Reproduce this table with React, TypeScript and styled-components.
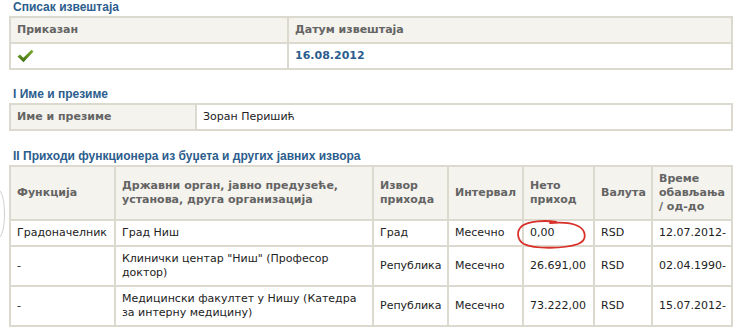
import React from "react";
import styled, { createGlobalStyle } from "styled-components";

const Global = createGlobalStyle`
  html, body { margin: 0; padding: 0; background: #fff; }
  body { width: 742px; height: 336px; overflow: hidden; }
`;

const Page = styled.div`
  position: relative;
  padding: 1px 9px 0 9px;
  width: 724px;
  font-family: "DejaVu Sans", Verdana, sans-serif;
  font-size: 11px;
  color: #222;
`;

const Section = styled.section<{ $gap?: number }>`
  margin-top: ${(p) => p.$gap ?? 0}px;
`;

const Title = styled.h2`
  margin: 0 0 2px 0;
  padding-left: 4px;
  font-family: "Liberation Sans", Arial, sans-serif;
  font-weight: bold;
  font-size: 12px;
  line-height: 13px;
  color: #2c5d8d;
`;

const Table = styled.table`
  width: 724px;
  table-layout: fixed;
  border-collapse: collapse;
  border: 2px solid #dcd9ce;
`;

const Th = styled.th`
  background: #f4f3ee;
  border: 2px solid #dcd9ce;
  padding: 5px 6px 5px 6px;
  text-align: left;
  vertical-align: middle;
  font-weight: bold;
  color: #646464;
  line-height: 14px;
`;

const Td = styled.td<{ $bold?: boolean }>`
  position: relative;
  border: 2px solid #dcd9ce;
  padding: 5px 6px;
  text-align: left;
  vertical-align: middle;
  line-height: 14px;
  color: ${(p) => (p.$bold ? "#2c5d8d" : "#222")};
  font-weight: ${(p) => (p.$bold ? "bold" : "normal")};
`;

const Check = styled.svg`
  display: block;
  width: 17px;
  height: 14px;
`;

const Scribble = styled.svg`
  position: absolute;
  left: -8px;
  top: -3px;
  width: 72px;
  height: 32px;
  pointer-events: none;
`;

const Arc = styled.svg`
  position: absolute;
  left: 0;
  top: 190px;
  width: 8px;
  height: 48px;
`;

const incomes = [
  {
    f: "Градоначелник",
    org: "Град Ниш",
    src: "Град",
    iv: "Месечно",
    net: "0,00",
    cur: "RSD",
    time: "12.07.2012-",
    mark: true,
  },
  {
    f: "-",
    org: 'Клинички центар "Ниш" (Професор доктор)',
    src: "Република",
    iv: "Месечно",
    net: "26.691,00",
    cur: "RSD",
    time: "02.04.1990-",
  },
  {
    f: "-",
    org: "Медицински факултет у Нишу (Катедра за интерну медицину)",
    src: "Република",
    iv: "Месечно",
    net: "73.222,00",
    cur: "RSD",
    time: "15.07.2012-",
  },
];

export default function App() {
  return (
    <>
      <Global />
      <Page>
        <Arc viewBox="0 0 8 48">
          <path d="M0 1 C6 8 6 40 0 47" fill="none" stroke="#cfcfcf" strokeWidth="1" />
        </Arc>
        <Section>
          <Title>Списак извештаја</Title>
          <Table>
            <colgroup>
              <col style={{ width: 278 }} />
              <col />
            </colgroup>
            <thead>
              <tr>
                <Th>Приказан</Th>
                <Th>Датум извештаја</Th>
              </tr>
            </thead>
            <tbody>
              <tr>
                <Td>
                  <Check viewBox="0 0 17 14">
                    <defs>
                      <linearGradient id="g" x1="0" y1="0" x2="0" y2="1">
                        <stop offset="0" stopColor="#7fae2e" />
                        <stop offset="1" stopColor="#3f6d12" />
                      </linearGradient>
                    </defs>
                    <path
                      d="M0.5 7.5 L3 5.5 L6.3 8.8 L14.5 0.8 L16.5 2.6 L6.5 13.3 Z"
                      fill="url(#g)"
                    />
                  </Check>
                </Td>
                <Td $bold>16.08.2012</Td>
              </tr>
            </tbody>
          </Table>
        </Section>

        <Section $gap={18}>
          <Title>I Име и презиме</Title>
          <Table>
            <colgroup>
              <col style={{ width: 186 }} />
              <col />
            </colgroup>
            <tbody>
              <tr>
                <Th>Име и презиме</Th>
                <Td>Зоран Перишић</Td>
              </tr>
            </tbody>
          </Table>
        </Section>

        <Section $gap={19}>
          <Title>II Приходи функционера из буџета и других јавних извора</Title>
          <Table>
            <colgroup>
              <col style={{ width: 105 }} />
              <col style={{ width: 258 }} />
              <col style={{ width: 75 }} />
              <col style={{ width: 75 }} />
              <col style={{ width: 71 }} />
              <col style={{ width: 58 }} />
              <col />
            </colgroup>
            <thead>
              <tr>
                <Th>Функција</Th>
                <Th>Државни орган, јавно предузеће, установа, друга организација</Th>
                <Th>Извор прихода</Th>
                <Th>Интервал</Th>
                <Th>Нето приход</Th>
                <Th>Валута</Th>
                <Th>Време обављања / од-до</Th>
              </tr>
            </thead>
            <tbody>
              {incomes.map((r, i) => (
                <tr key={i}>
                  <Td>{r.f}</Td>
                  <Td>{r.org}</Td>
                  <Td>{r.src}</Td>
                  <Td>{r.iv}</Td>
                  <Td>
                    {r.net}
                    {r.mark && (
                      <Scribble viewBox="0 0 72 32">
                        <path
                          d="M40 4 C30 2 12 3 6 8 C0 13 1 22 8 26 C18 31 48 31 62 26 C72 22 70 12 62 8 C56 5 46 4 34 5"
                          fill="none"
                          stroke="#d9302a"
                          strokeWidth="1.8"
                          strokeLinecap="round"
                        />
                      </Scribble>
                    )}
                  </Td>
                  <Td>{r.cur}</Td>
                  <Td>{r.time}</Td>
                </tr>
              ))}
            </tbody>
          </Table>
        </Section>
      </Page>
    </>
  );
}
